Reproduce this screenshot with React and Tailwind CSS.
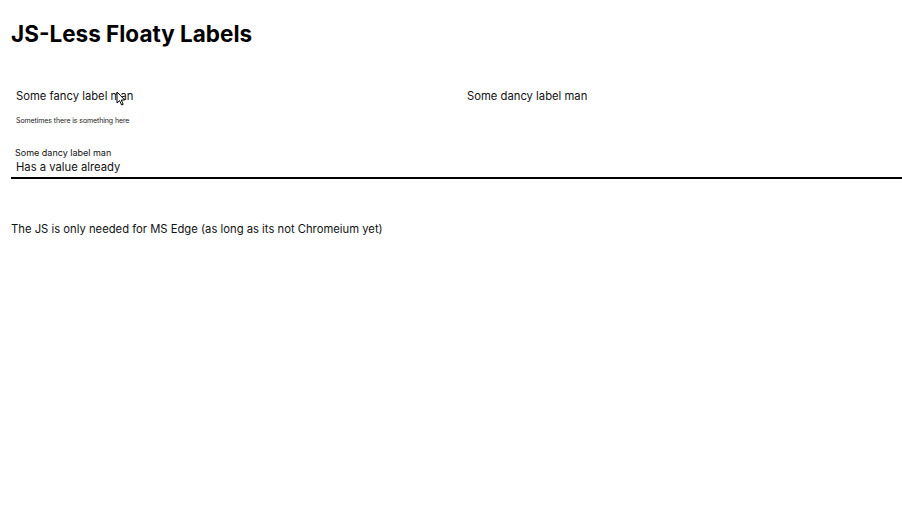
import { useState } from 'react';

// Floaty label field: label sits in the input until it has a value, then shrinks up top
const Field = ({ label, hint, defaultValue = '', wide }) => {
    const [value, setValue] = useState(defaultValue);
    const filled = value.length > 0;

    return (
        <div className={`relative flex flex-col ${wide ? 'col-span-2' : ''}`}>
            <label className={`relative block ${filled ? 'border-b-[2.5px] border-black' : ''}`}>
                <span
                    className={
                        filled
                            ? 'block pl-1 pt-[2px] text-[9px] leading-[12px] text-[#111]'
                            : 'absolute left-[5px] top-[10px] text-[11.25px] leading-[18px] text-[#111]'
                    }
                >
                    {label}
                </span>
                <input
                    type="text"
                    value={value}
                    onChange={(e) => setValue(e.target.value)}
                    className={`block w-full bg-transparent px-[5px] text-[11.25px] leading-[16px] text-[#111] outline-none ${filled ? 'pb-[2px]' : 'h-[34px]'}`}
                />
            </label>
            {hint && <p className="pl-[5px] pt-[5px] text-[7px] leading-[10px] tracking-[-0.1px] text-[#222]">{hint}</p>}
        </div>
    );
};

export default function App() {
    return (
        <div className="relative min-h-screen bg-white pl-[11px] pt-[19px] text-black" style={{ fontFamily: 'Inter, "Noto Sans", sans-serif' }}>
            <h1 className="text-[22.5px] font-bold leading-[30px]">JS-Less Floaty Labels</h1>

            <form className="mt-[28px] grid grid-cols-2 gap-x-[11px] gap-y-[19px]">
                <Field label="Some fancy label man" hint="Sometimes there is something here" />
                <Field label="Some dancy label man" />
                <Field label="Some dancy label man" defaultValue="Has a value already" wide />
            </form>

            <p className="mt-[42px] text-[11.25px] leading-[16px] text-[#111]">
                The JS is only needed for MS Edge (as long as its not Chromeium yet)
            </p>

            {/* mouse pointer */}
            <svg className="pointer-events-none absolute left-[116px] top-[91px]" width="10" height="15" viewBox="0 0 10 15">
                <path d="M1 1 L1 12 L3.6 9.6 L5.6 14 L7.2 13.3 L5.3 9 L8.8 9 Z" fill="#fff" stroke="#000" strokeWidth="1" strokeLinejoin="round" />
            </svg>
        </div>
    );
}
